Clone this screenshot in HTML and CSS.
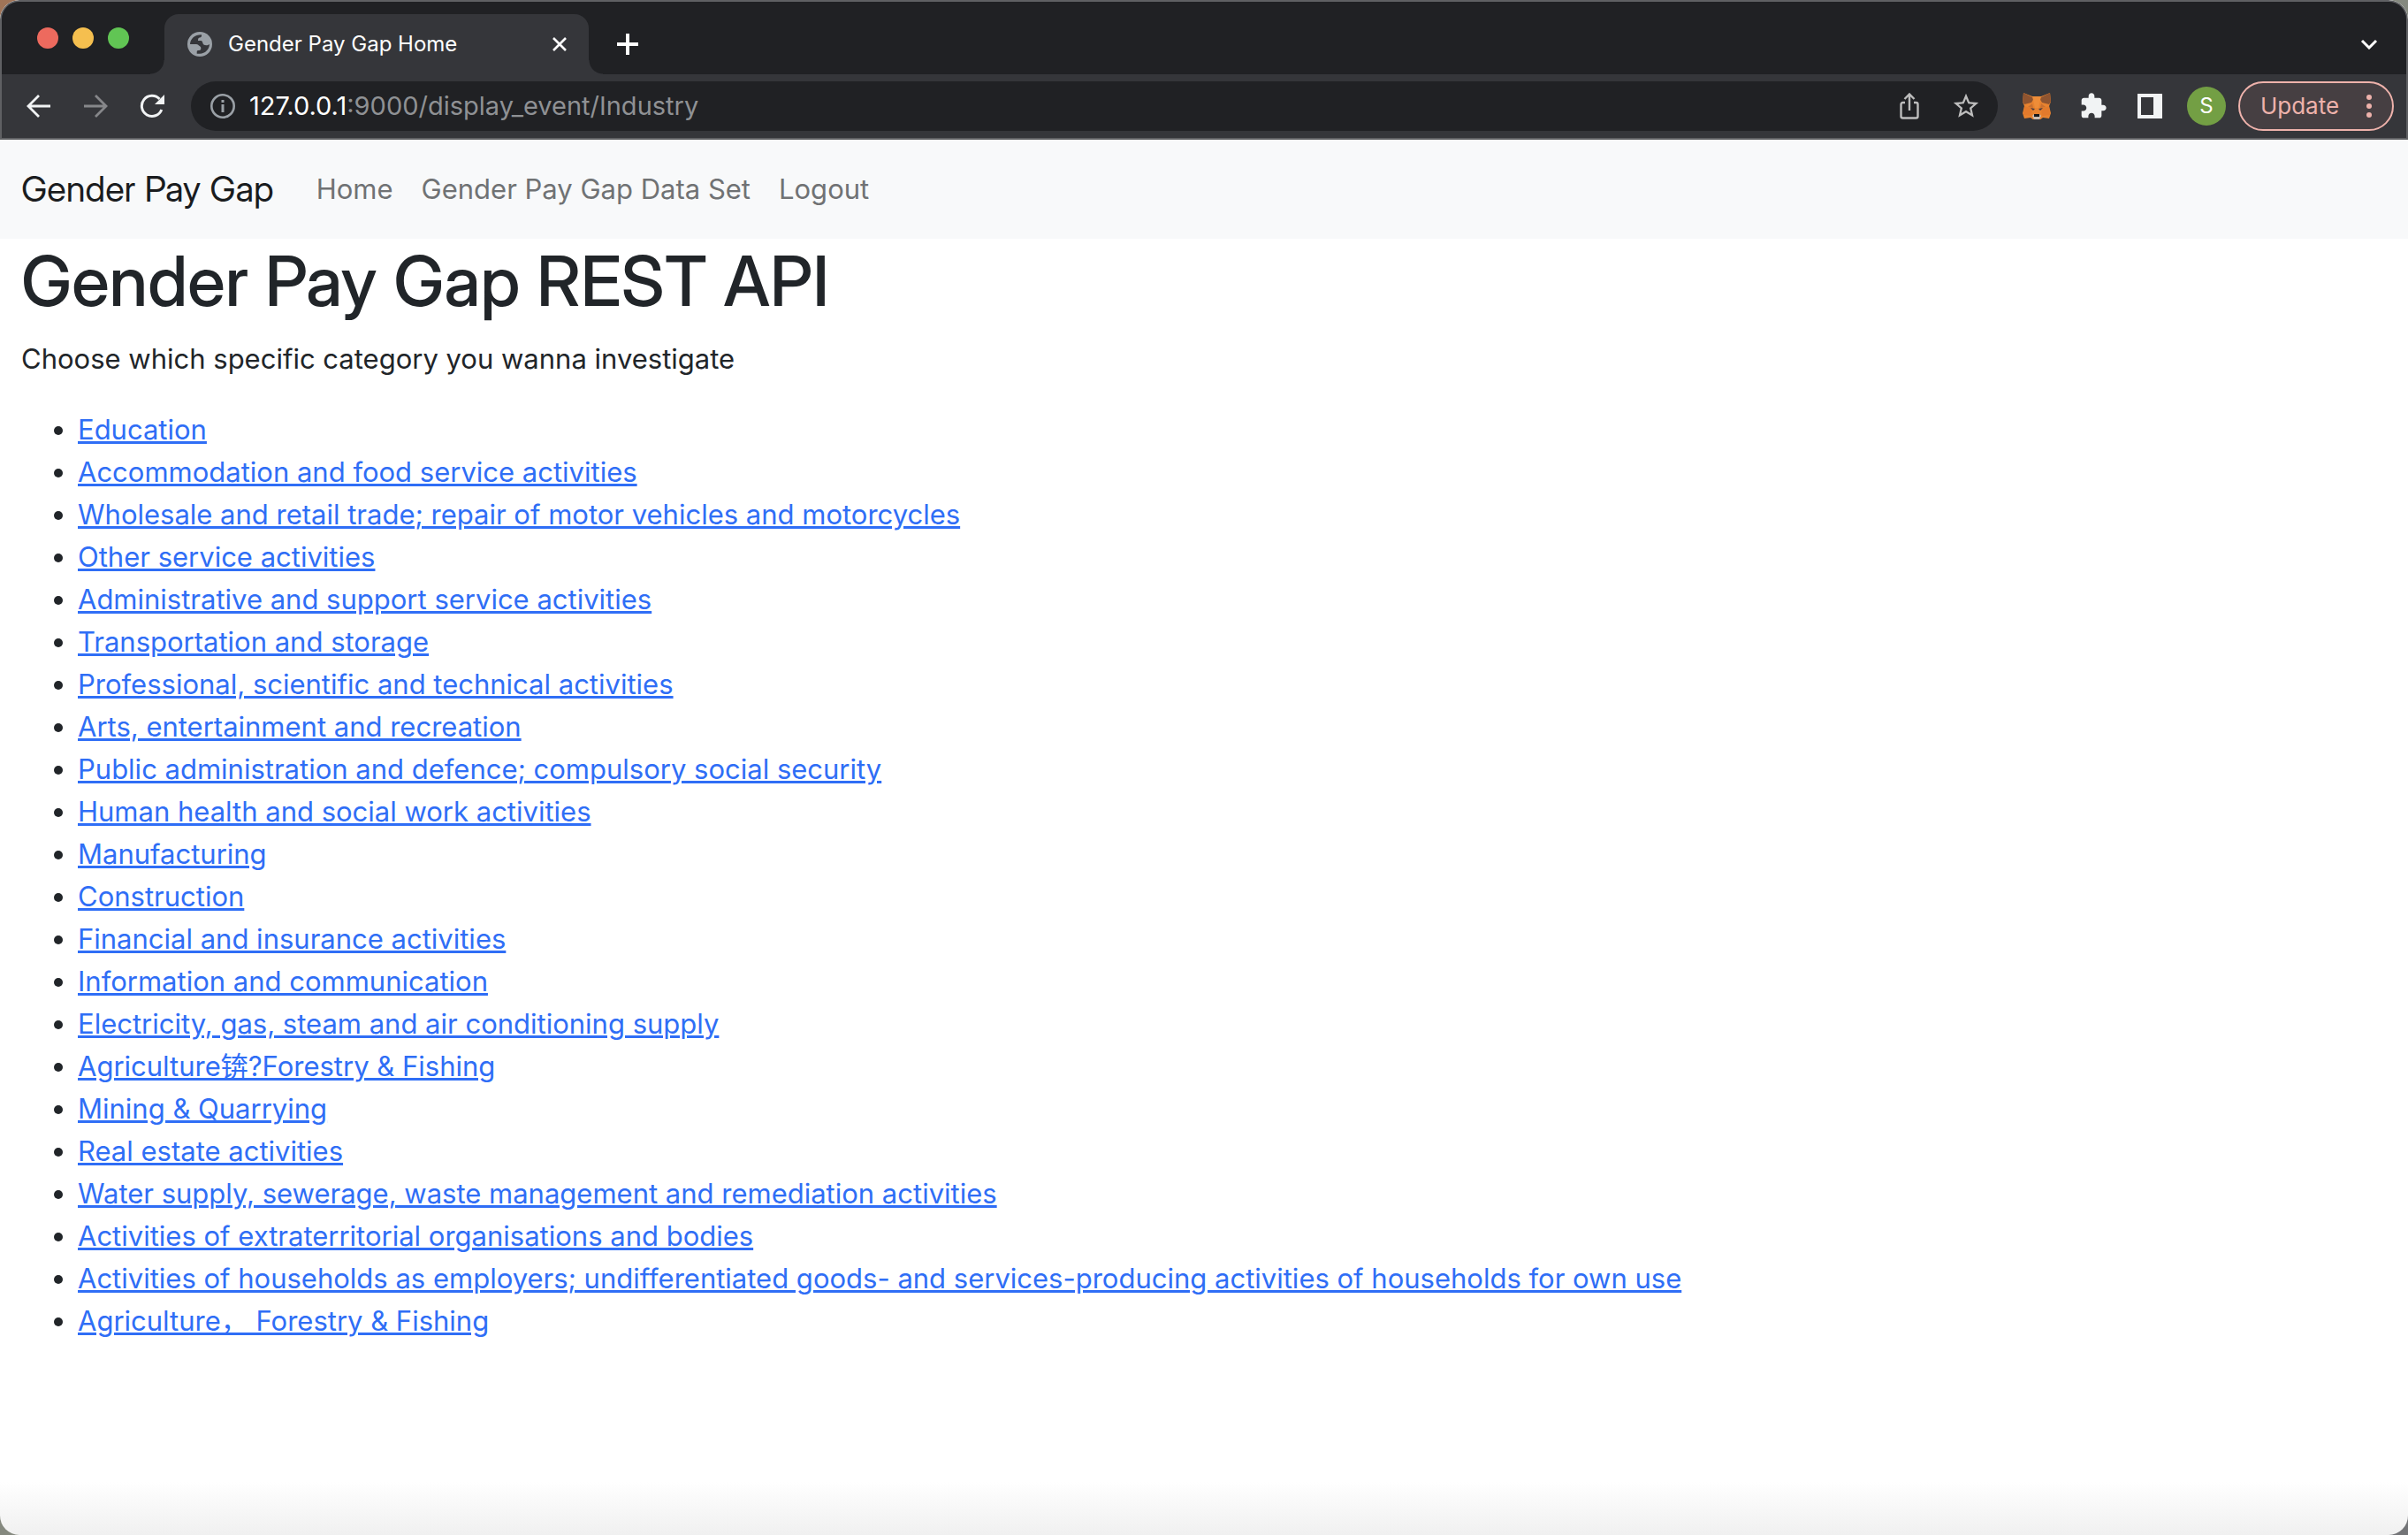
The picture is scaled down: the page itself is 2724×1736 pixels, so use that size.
FILE: index.html
```html
<!DOCTYPE html>
<html lang="en">
<head>
<meta charset="utf-8">
<title>Gender Pay Gap Home</title>
<link rel="stylesheet" href="styles.css">
</head>
<body>
<div class="window">
  <header class="chrome">
    <div class="tab-strip">
      <div class="traffic">
        <button class="light red" aria-label="Close window"></button>
        <button class="light yellow" aria-label="Minimise window"></button>
        <button class="light green" aria-label="Zoom window"></button>
      </div>
      <div class="tab">
        <svg class="globe" viewBox="0 0 28 28" width="28" height="28" aria-hidden="true"><circle cx="14" cy="14" r="14" fill="#9aa0a6"/><path d="M3 14C3.300 8 8 3.300 16 3.300c.6 2-.6 3-2 3.200-1.600.3-2 1-2 3.500h3c2 0 2 1.500 2.500 3 .6 2.500 5 3 7.500 1-.3 6-5 10.700-11 10.700h-3.300v-2c0-1.500 1-1.700 2.300-1.700 2 0 2.300-1 2.300-2.500 0-2.500-1.800-2-2.800-3.500-.6-1-2-1-3.500-1z" fill="#35363a"/></svg>
        <span class="tab-title">Gender Pay Gap Home</span>
        <button class="tab-close" aria-label="Close tab"><svg viewBox="0 0 18 18" width="18" height="18"><path d="M2 2l14 14M16 2L2 16" stroke="#fff" stroke-width="2.600"/></svg></button>
      </div>
      <button class="new-tab" aria-label="New tab"><svg viewBox="0 0 24 24" width="24" height="24"><path d="M12 0v24M0 12h24" stroke="#fff" stroke-width="4"/></svg></button>
      <button class="tab-search" aria-label="Search tabs"><svg viewBox="0 0 20 12" width="20" height="12"><path d="M2 2l8 8 8-8" fill="none" stroke="#fff" stroke-width="3"/></svg></button>
    </div>
    <div class="toolbar">
      <button class="tool" aria-label="Back"><svg viewBox="0 0 28 28" width="28" height="28"><path d="M27 14H3M14 2L2 14l12 12" fill="none" stroke="#f1f3f4" stroke-width="2.800"/></svg></button>
      <button class="tool" aria-label="Forward"><svg viewBox="0 0 28 28" width="28" height="28"><path d="M1 14h24M14 2l12 12-12 12" fill="none" stroke="#86878a" stroke-width="2.800"/></svg></button>
      <button class="tool" aria-label="Reload"><svg viewBox="0 0 28 28" width="28" height="28"><path d="M22.500 6A11.600 11.600 0 1 0 24.800 18" fill="none" stroke="#f1f3f4" stroke-width="3"/><path d="M28 1v11H17z" fill="#f1f3f4"/></svg></button>
      <div class="omnibox">
        <button class="info" aria-label="Site information"><svg viewBox="0 0 28 28" width="28" height="28"><circle cx="14" cy="14" r="12.700" fill="none" stroke="#9aa0a6" stroke-width="2.600"/><path d="M14 12v9M14 7v3" stroke="#9aa0a6" stroke-width="3"/></svg></button>
        <div class="url" role="textbox" contenteditable="true" spellcheck="false" aria-label="Address"><span class="host">127.0.0.1</span>:9000/display_event/Industry</div>
        <button class="tool" aria-label="Share"><svg viewBox="0 0 28 30" width="28" height="30"><path d="M9 11H6.500a2 2 0 0 0-2 2v13.500a2 2 0 0 0 2 2h15a2 2 0 0 0 2-2V13a2 2 0 0 0-2-2H19M14 20V2M8.500 7L14 1.500 19.500 7" fill="none" stroke="#bdbdbd" stroke-width="2.400"/></svg></button>
        <button class="tool" aria-label="Bookmark"><svg viewBox="0 0 24 24" width="34" height="34"><path fill="#bdbdbd" d="M22 9.240l-7.190-.62L12 2 9.190 8.630 2 9.240l5.460 4.730L5.820 21 12 17.270 18.180 21l-1.630-7.030L22 9.240zM12 15.400l-3.760 2.270 1-4.280-3.320-2.880 4.380-.38L12 6.100l1.710 4.040 4.380.38-3.320 2.880 1 4.280L12 15.400z"/></svg></button>
      </div>
      <button class="tool" aria-label="MetaMask"><svg viewBox="0 0 32 30" width="32" height="30"><path d="M1 0l10 4h10l10-4 1 10-2 5 2 8-2 6-7-1-4 3h-6l-4-3-7 1-2-6 2-8L0 10z" fill="#e8832f"/><path d="M1 0l12 6-3 5-8 2-2-3zM31 0L19 6l3 5 8 2 2-3z" fill="#8e5430"/><path d="M11 4h10l-3 13h-4z" fill="#ee8d38"/><path d="M2 15l9 3-1 8-9-1zM30 15l-9 3 1 8 9-1z" fill="#e27a2c"/><path d="M11 12l1 5-6-1zM21 12l-1 5 6-1z" fill="#c97030"/><path d="M9 17l5 1-2 2zM23 17l-5 1 2 2z" fill="#473a3f"/><path d="M11 26l2-2h6l2 2-2 4h-6z" fill="#c9bcb0"/><path d="M13 24h6v3h-6z" fill="#17181a"/></svg></button>
      <button class="tool" aria-label="Extensions"><svg viewBox="0 0 24 24" width="32" height="32"><path fill="#f1f3f4" d="M20.500 11H19V7c0-1.100-.9-2-2-2h-4V3.500C13 2.120 11.880 1 10.500 1S8 2.120 8 3.500V5H4c-1.100 0-1.990.9-1.990 2v3.800H3.500c1.490 0 2.700 1.210 2.700 2.700s-1.210 2.700-2.700 2.700H2V20c0 1.100.9 2 2 2h3.800v-1.500c0-1.490 1.210-2.700 2.700-2.700 1.490 0 2.700 1.210 2.700 2.700V22H17c1.100 0 2-.9 2-2v-4h1.500c1.380 0 2.500-1.120 2.500-2.500S21.880 11 20.500 11z"/></svg></button>
      <button class="tool" aria-label="Side panel"><svg viewBox="0 0 28 28" width="28" height="28"><path d="M0 0h28v28H0zM4 4v20h14V4z" fill="#f1f3f4" fill-rule="evenodd"/></svg></button>
      <button class="tool" aria-label="Profile"><span class="avatar">S</span></button>
      <button class="update">Update<svg viewBox="0 0 6 26" width="6" height="26" aria-hidden="true"><g fill="#eeb2ab"><circle cx="3" cy="3" r="3"/><circle cx="3" cy="13" r="3"/><circle cx="3" cy="23" r="3"/></g></svg></button>
    </div>
  </header>
  <nav class="navbar">
    <a class="brand" href="#">Gender Pay Gap</a>
    <a class="nav-link" href="#">Home</a>
    <a class="nav-link" href="#">Gender Pay Gap Data Set</a>
    <a class="nav-link" href="#">Logout</a>
  </nav>
  <main class="content">
    <h1>Gender Pay Gap REST API</h1>
    <p>Choose which specific category you wanna investigate</p>
    <ul>
      <li><a href="#">Education</a></li>
      <li><a href="#">Accommodation and food service activities</a></li>
      <li><a href="#">Wholesale and retail trade; repair of motor vehicles and motorcycles</a></li>
      <li><a href="#">Other service activities</a></li>
      <li><a href="#">Administrative and support service activities</a></li>
      <li><a href="#">Transportation and storage</a></li>
      <li><a href="#">Professional, scientific and technical activities</a></li>
      <li><a href="#">Arts, entertainment and recreation</a></li>
      <li><a href="#">Public administration and defence; compulsory social security</a></li>
      <li><a href="#">Human health and social work activities</a></li>
      <li><a href="#">Manufacturing</a></li>
      <li><a href="#">Construction</a></li>
      <li><a href="#">Financial and insurance activities</a></li>
      <li><a href="#">Information and communication</a></li>
      <li><a href="#">Electricity, gas, steam and air conditioning supply</a></li>
      <li><a href="#">Agriculture锛?Forestry &amp; Fishing</a></li>
      <li><a href="#">Mining &amp; Quarrying</a></li>
      <li><a href="#">Real estate activities</a></li>
      <li><a href="#">Water supply, sewerage, waste management and remediation activities</a></li>
      <li><a href="#">Activities of extraterritorial organisations and bodies</a></li>
      <li><a href="#">Activities of households as employers; undifferentiated goods- and services-producing activities of households for own use</a></li>
      <li><a href="#">Agriculture， Forestry &amp; Fishing</a></li>
    </ul>
  </main>
</div>
</body>
</html>
```
FILE: styles.css
```css
* { box-sizing: border-box; }
body {
  margin: 0;
  font-family: Inter, "Noto Sans CJK SC", sans-serif;
  font-size: 31px;
  line-height: 48px;
  color: #212529;
  background: linear-gradient(to bottom right, #a07457, #85897f 50%, #737477);
}
button {
  margin: 0;
  padding: 0;
  border: 0;
  background: none;
  font: inherit;
  color: inherit;
  display: flex;
  align-items: center;
  justify-content: center;
  flex: none;
}
.window {
  min-height: 100vh;
  border-radius: 22px;
  overflow: hidden;
  background: linear-gradient(to top, #f0f0f0, #fff 60px);
}
.chrome {
  border: 2px solid #5f6063;
  border-radius: 22px 22px 0 0;
  background: #35363a;
  color: #fff;
  overflow: hidden;
}
.tab-strip {
  display: flex;
  height: 82px;
  padding-top: 14px;
  background: #202124;
}
.traffic {
  display: flex;
  gap: 16px;
  padding: 15px 40px;
}
.light { width: 24px; height: 24px; border-radius: 50%; }
.red { background: #ed6a5e; }
.yellow { background: #f5bf4f; }
.green { background: #61c554; }
.tab {
  position: relative;
  display: flex;
  align-items: center;
  width: 480px;
  padding: 0 24px 0 26px;
  border-radius: 16px 16px 0 0;
  background: #35363a;
  font-size: 24px;
  line-height: 32px;
}
.tab::before,
.tab::after {
  content: "";
  position: absolute;
  bottom: 0;
  width: 16px;
  height: 16px;
}
.tab::before { right: 100%; background: radial-gradient(circle at 0 0, #202124 15px, #35363a 16px); }
.tab::after { left: 100%; background: radial-gradient(circle at 100% 0, #202124 15px, #35363a 16px); }
.tab-title { flex: 1; padding-left: 18px; }
.new-tab { width: 48px; margin-left: 20px; }
.tab-search { width: 48px; margin-left: auto; margin-right: 18px; }
.toolbar {
  display: flex;
  align-items: center;
  height: 72px;
  padding: 0 14px 0 10px;
}
.tool { width: 64px; height: 56px; }
.omnibox {
  flex: 1;
  display: flex;
  align-items: center;
  height: 56px;
  margin: 0 12px;
  padding: 0 4px 0 22px;
  border-radius: 28px;
  background: #202124;
  font-size: 29px;
  line-height: 40px;
  color: #8f9194;
}
.url { flex: 1; padding-left: 16px; outline: 0; }
.host { color: #fff; }
.avatar {
  width: 44px;
  height: 44px;
  border-radius: 50%;
  background: #739f44;
  color: #fff;
  font-size: 24px;
  line-height: 44px;
}
.update {
  gap: 31px;
  width: 176px;
  height: 56px;
  margin-left: 4px;
  border: 2px solid #eeb2ab;
  border-radius: 28px;
  background: #463f42;
  color: #eeb2ab;
  font-size: 26px;
}
.navbar {
  display: flex;
  align-items: center;
  height: 112px;
  padding: 0 24px;
  background: #f8f9fa;
}
.brand,
h1 {
  font-family: "Inter Display", Inter, sans-serif;
}
.brand {
  margin-right: 32px;
  font-size: 40px;
  line-height: 60px;
  color: #1a1c1e;
  text-decoration: none;
}
.nav-link {
  padding: 0 16px;
  color: #707274;
  text-decoration: none;
}
.content { padding: 0 24px; }
h1 {
  margin: 0 0 16px;
  font-size: 78px;
  font-weight: 500;
  line-height: 96px;
}
p { margin: 0 0 32px; }
ul { margin: 0; padding: 0 0 0 64px; }
ul a { color: #2f6ef6; text-decoration-thickness: 3px; }
```
